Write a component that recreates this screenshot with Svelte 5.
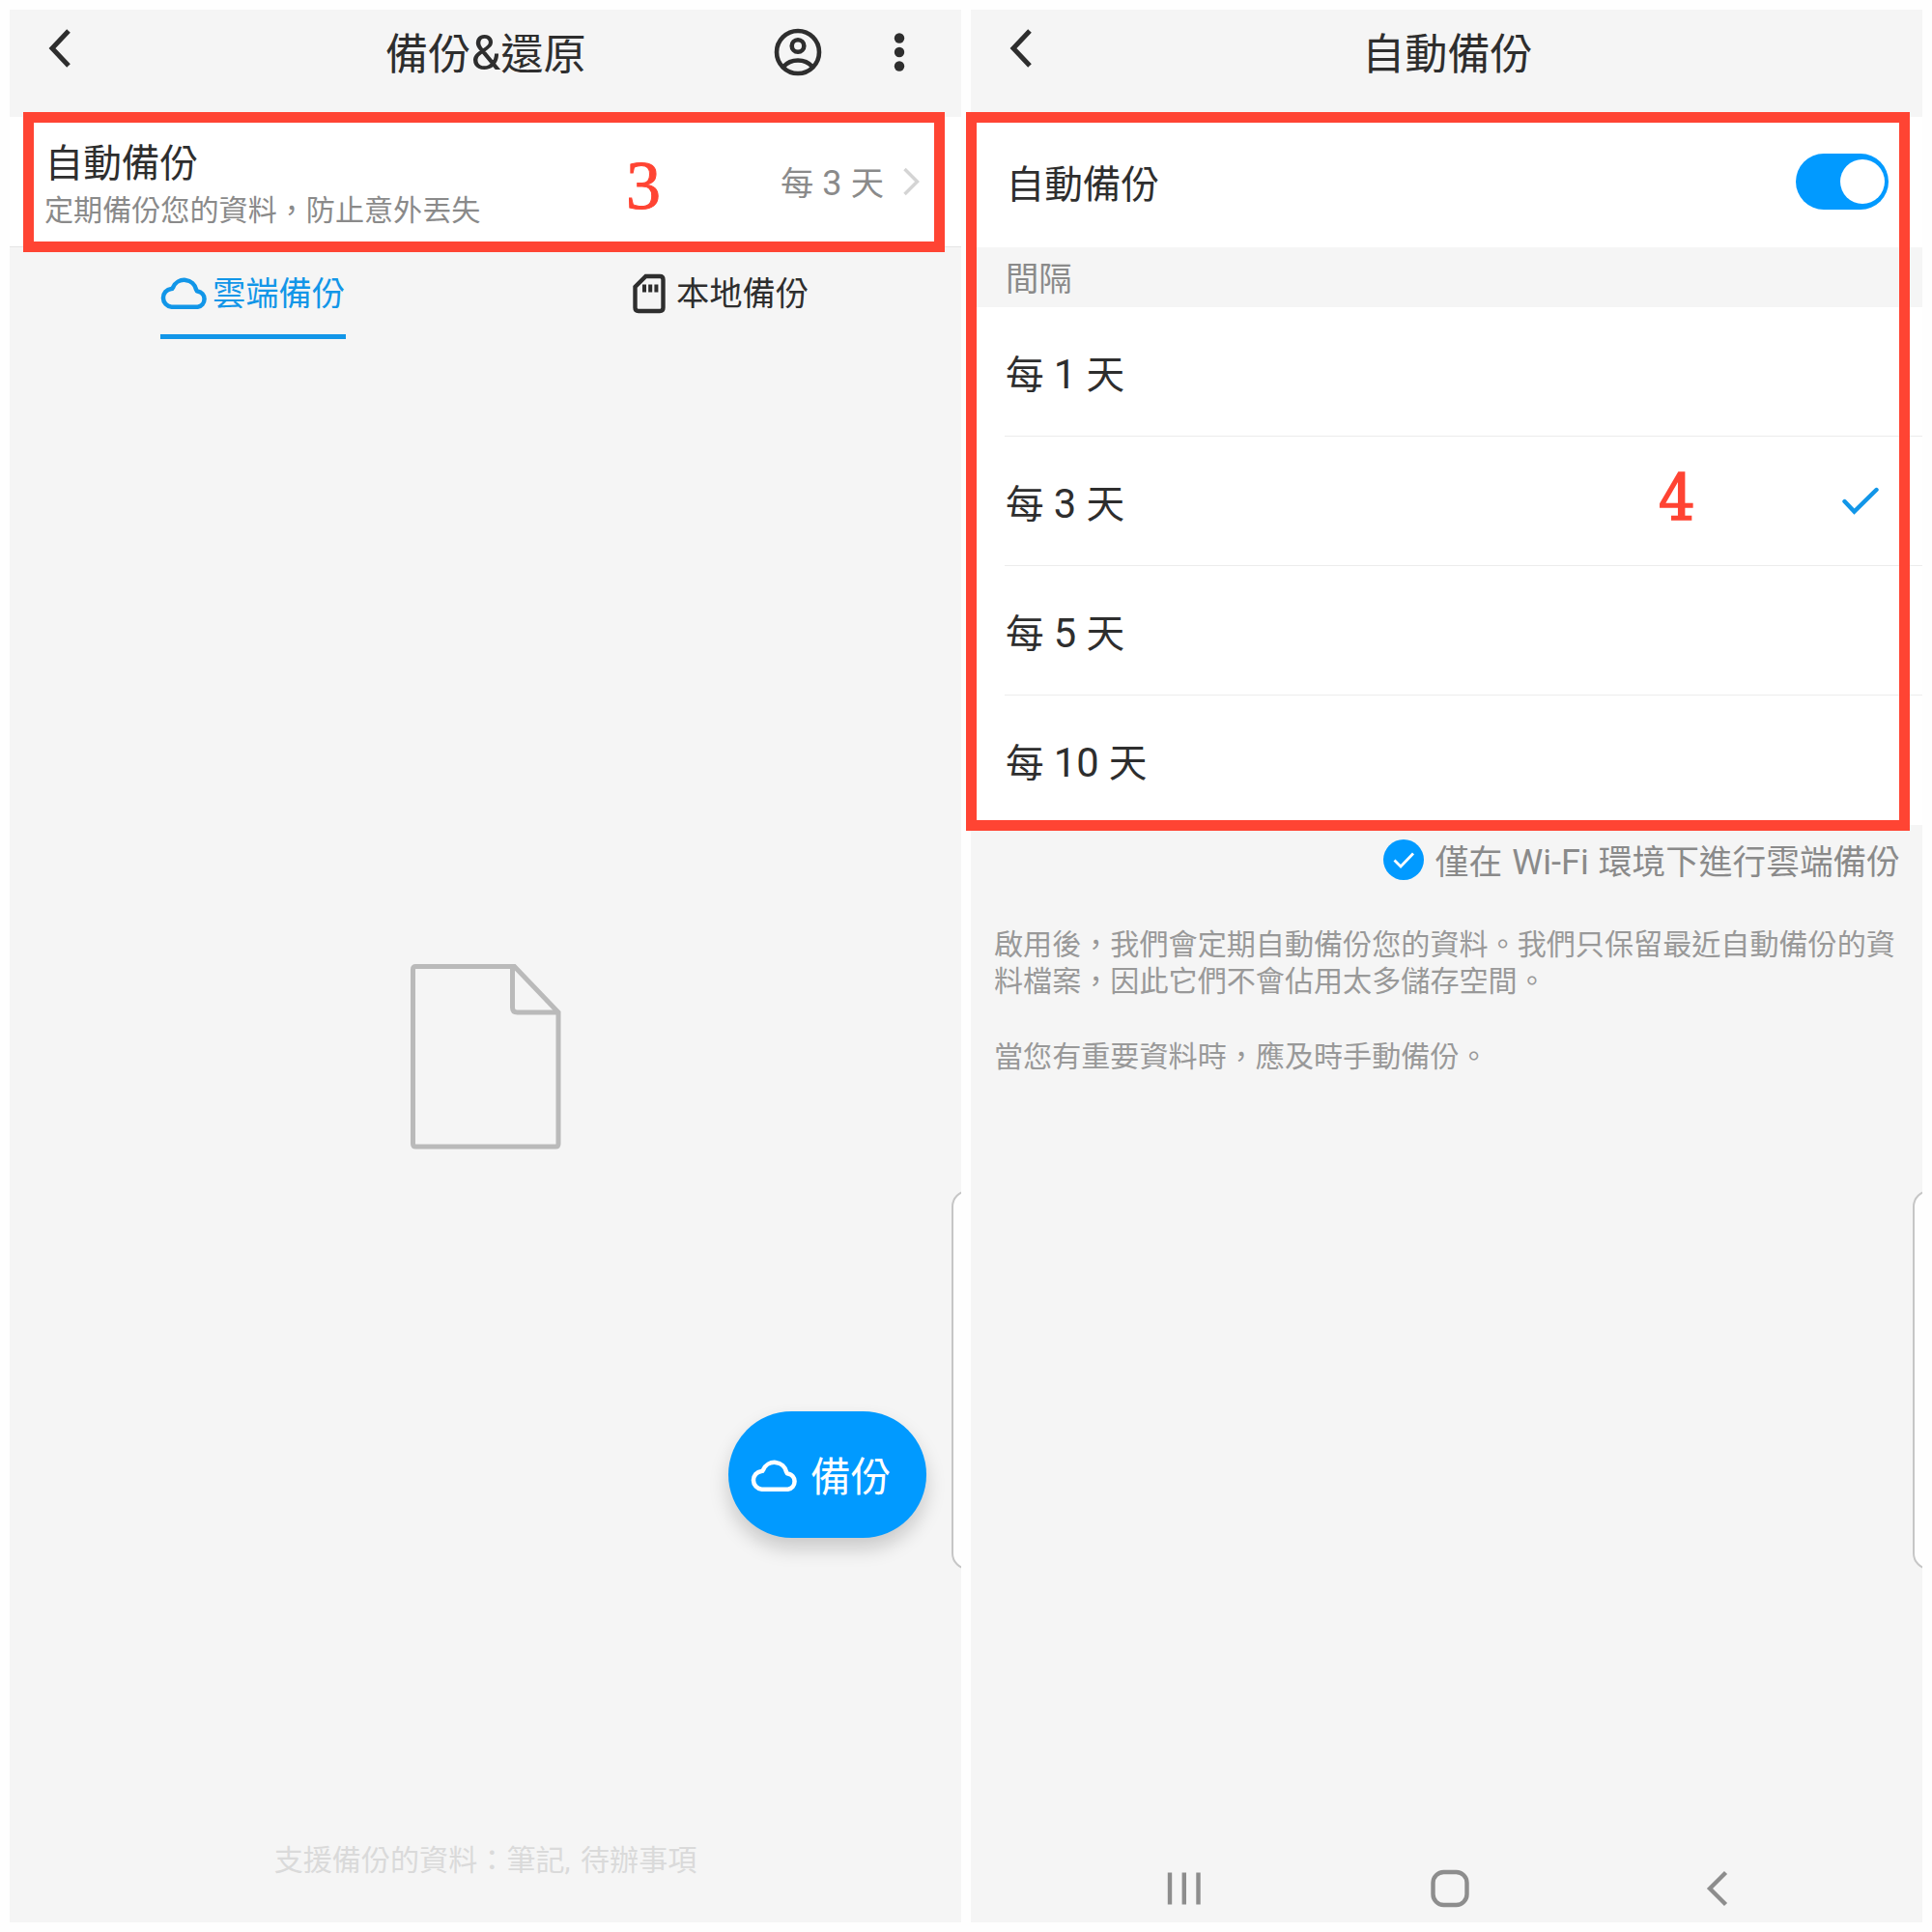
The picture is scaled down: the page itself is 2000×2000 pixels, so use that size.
<script>
  const intervals = [1, 3, 5, 10];
  let selected = $state(3);
  let enabled = $state(true);
</script>

{#snippet back()}
  <svg class="back" width="24" height="40" viewBox="0 0 24 40"><path d="M21 2 4 20l17 18" /></svg>
{/snippet}

{#snippet cloud()}
  <svg class="cloud" width="49" height="34" viewBox="0.500 0 47 33">
    <path d="M11.500 30.800a9.200 9.200 0 0 1-.300-18.300c.800 0 1.400-.400 1.700-1.200A12.300 12.300 0 0 1 36.300 13.600c.200.800.600 1.200 1.400 1.400A8 8 0 0 1 37.700 30.800z" />
  </svg>
{/snippet}

<main>
  <section class="phone">
    <header>
      {@render back()}
      <h1>備份<span class="latin">&amp;</span>還原</h1>
      <svg class="account" width="50" height="50" viewBox="0 0 50 50">
        <circle cx="25" cy="25" r="22" />
        <circle cx="25" cy="18.500" r="6.300" />
        <path d="M10 40c4-4.500 9-6.500 15-6.500s11 2 15 6.500" />
      </svg>
      <svg class="more" width="12" height="42" viewBox="0 0 12 42">
        <circle cx="6" cy="6.500" r="5.200" /><circle cx="6" cy="21" r="5.200" /><circle cx="6" cy="35.500" r="5.200" />
      </svg>
    </header>

    <div class="auto">
      <div class="label">
        <div class="item">自動備份</div>
        <div class="sub">定期備份您的資料，防止意外丟失</div>
      </div>
      <div class="value">每 <span class="latin">3</span> 天</div>
      <svg class="next" width="18" height="30" viewBox="0 0 18 30"><path d="M2.500 2 15.500 15 2.500 28" /></svg>
    </div>

    <nav class="tabs">
      <div class="tab active">{@render cloud()}<span>雲端備份</span></div>
      <div class="tab">
        <svg class="sd" width="34" height="42" viewBox="0 0 34 42">
          <path d="M13.500 3H28q3.500 0 3.500 3.500V35.500Q31.500 39 28 39H6Q2.500 39 2.500 35.500V14z" />
          <path class="pins" d="M12 11.500v8M18.200 11.500v8M24.400 11.500v8" />
        </svg>
        <span>本地備份</span>
      </div>
    </nav>

    <div class="empty">
      <svg class="doc" width="156" height="192" viewBox="0 0 156 192">
        <path d="M107.500 2.500H5.500Q2.500 2.500 2.500 5.500V186Q2.500 189 5.500 189H150Q153 189 153 186V50z" />
        <path d="M105.500 3V45q0 5 5 5H153" />
      </svg>
    </div>
    <button class="fab">{@render cloud()}<span>備份</span></button>
    <footer>支援備份的資料：筆記, 待辦事項</footer>
    <div class="edge"></div>
    <div class="mark first"></div>
    <div class="number three">3</div>
  </section>

  <section class="phone">
    <header>
      {@render back()}
      <h1 class="auto-title">自動備份</h1>
    </header>
    <div class="switch-row">
      <div class="item">自動備份</div>
      <button class="switch" class:on={enabled} aria-label="自動備份" onclick={() => (enabled = !enabled)}><i></i></button>
    </div>
    <div class="section-title">間隔</div>
    <div class="list">
      {#each intervals as days}
        <button class="option" onclick={() => (selected = days)}>
          <span>每 <span class="latin">{days}</span> 天</span>
          {#if selected === days}
            <svg class="tick" width="38" height="30" viewBox="0 0 38 30"><path d="M2.500 15 12.500 25.500 35.500 3" /></svg>
          {/if}
        </button>
      {/each}
    </div>
    <div class="wifi">
      <svg width="42" height="42" viewBox="0 0 42 42"><circle cx="21" cy="21" r="21" /><path d="M11.500 21.500 18 28 31 14.500" /></svg>
      <span>僅在 <span class="latin">Wi-Fi</span> 環境下進行雲端備份</span>
    </div>
    <div class="notes">
      <p>啟用後，我們會定期自動備份您的資料。我們只保留最近自動備份的資<br />料檔案，因此它們不會佔用太多儲存空間。</p>
      <p>當您有重要資料時，應及時手動備份。</p>
    </div>
    <div class="system">
      <svg width="36" height="40" viewBox="0 0 36 40"><path d="M3 3.500v33M17.800 3.500v33M32.500 3.500v33" /></svg>
      <svg width="40" height="40" viewBox="0 0 40 40"><rect x="2.500" y="3" width="35" height="34" rx="11" /></svg>
      <svg width="24" height="40" viewBox="0 0 24 40"><path d="M20.500 3.500 4 20l16.500 16.500" /></svg>
    </div>
    <div class="edge"></div>
    <div class="mark second"></div>
    <div class="number four">4</div>
  </section>
</main>

<style>
  :global(body) { margin: 0; background: #fefefe; }
  * { box-sizing: border-box; }
  main {
    width: 2000px; height: 2000px; padding: 10px; display: flex; gap: 10px; overflow: hidden;
    font-family: Roboto, "Noto Sans CJK TC", sans-serif; color: #2e2e2e;
  }
  svg { fill: none; stroke: currentColor; display: block; flex: none; }
  button { border: 0; background: none; padding: 0; font: inherit; color: inherit; }
  .latin { font-size: 1.050em; line-height: 1; }
  .phone {
    position: relative; width: 985px; height: 1980px; background: #f5f5f5;
    display: flex; flex-direction: column;
  }
  header { height: 111px; flex: none; display: flex; align-items: flex-start; padding-left: 40px; }
  .back { margin-top: 20px; stroke-width: 5; }
  h1 { margin: 15px 0 0 325px; width: 208px; font-size: 44.200px; line-height: 64px; font-weight: 400; white-space: nowrap; }
  h1 .latin { font-size: 1.120em; }
  .auto-title { margin-left: 341px; }
  .account { margin: 19px 0 0 194px; stroke-width: 4.600; }
  .more { margin: 23px 0 0 74px; fill: currentColor; stroke: none; }

  .auto { height: 135px; flex: none; background: #fff; border-bottom: 1px solid #e4e4e4; display: flex; align-items: center; padding: 0 43px 0 36px; }
  .label { flex: 1; padding-top: 5px; }
  .item { font-size: 39.700px; line-height: 58px; }
  .sub { font-size: 30.100px; line-height: 44px; color: #8a8a8a; margin-top: -3px; }
  .label .item { padding-left: .500px; }
  .value { font-size: 34.300px; line-height: 50px; color: #8a8a8a; margin: 3px 19px 0 0; word-spacing: .600px; }
  .next { color: #d4d4d4; stroke-width: 3.500; }

  .tabs { display: flex; flex: none; height: 96px; }
  .tab { height: 95px; margin-left: 156px; width: 192px; display: flex; align-items: center; font-size: 34.300px; padding-bottom: 5px; white-space: nowrap; }
  .tab.active { color: #1296e8; border-bottom: 5px solid #1296e8; padding-bottom: 0; }
  .tab.active .cloud, .tab.active :global(.cloud) { margin-top: 3px; }
  .tab.active span { margin-left: 5px; }
  .tab:last-child { margin-left: 297px; }
  .tab:last-child span { margin-left: 11px; }
  .cloud { stroke-width: 4.400; }
  .sd { stroke-width: 4.400; margin-top: 5px; }
  .sd .pins { stroke-width: 4; }

  .empty { flex: 1; padding: 646px 0 0 415px; }
  .doc { color: #bababa; stroke-width: 5; }
  .fab {
    position: absolute; left: 744px; top: 1451px; width: 205px; height: 131px; border-radius: 66px;
    background: #019aff; color: #fff; display: flex; align-items: center; padding: 0 0 2px 23px;
    font-size: 41.700px; box-shadow: 0 11px 20px #0000002e;
  }
  .fab .cloud { margin-top: 2px; }
  .fab span { margin-left: 13px; white-space: nowrap; }
  footer { height: 86px; flex: none; text-align: center; font-size: 30.100px; line-height: 44px; color: #dadada; word-spacing: 3px; }

  .edge { position: absolute; right: 0; top: 1222px; width: 10px; height: 393px; overflow: hidden; }
  .edge::before { content: ""; position: absolute; inset: 0 auto 0 0; width: 60px; border: 2px solid #c6c6c6; border-radius: 17px; background: #fefefe; }

  .mark { position: absolute; border: 11px solid #ff4433; pointer-events: none; }
  .first { left: 14px; top: 106px; width: 954px; height: 145px; }
  .second { left: -5px; top: 106px; width: 977px; height: 744px; }
  .number { position: absolute; color: #ff4433; }
  .three { left: 638px; top: 142px; font: 72px/80px "Liberation Serif", serif; -webkit-text-stroke: 1px #ff4433; }
  .four { left: 712px; top: 466px; font: 66px/80px "DejaVu Serif Condensed", "DejaVu Serif", serif; font-stretch: condensed; -webkit-text-stroke: 1.600px #ff4433; }

  .switch-row { height: 135px; flex: none; background: #fff; display: flex; align-items: center; justify-content: space-between; padding: 0 35px 0 36.500px; }
  .switch-row .item { margin-top: 7px; }
  .switch { width: 96px; height: 58px; border-radius: 29px; background: #ccc; padding: 6px 4px; display: flex; }
  .switch.on { background: #019aff; justify-content: flex-end; }
  .switch i { width: 46px; height: 46px; border-radius: 50%; background: #fff; }
  .switch-row .switch { margin-top: -2px; }
  .section-title { height: 62px; flex: none; padding: 8px 0 0 36px; font-size: 34.300px; line-height: 50px; color: #8a8a8a; }
  .list { background: #fff; height: 536px; flex: none; padding-left: 35px; display: grid; grid-template-rows: repeat(4, 1fr); }
  .option { display: flex; align-items: center; justify-content: space-between; font-size: 39.700px; word-spacing: .300px; border-bottom: 1px solid #ececec; padding: 0 45px 1px 1px; }
  .option:last-child { border-bottom: 0; }
  .tick { color: #1296e8; stroke-width: 4.400; stroke-linecap: round; margin-top: 2px; }
  .wifi { height: 72px; flex: none; display: flex; align-items: center; justify-content: flex-end; gap: 12px; padding-right: 23px; font-size: 34.700px; color: #8a8a8a; white-space: nowrap; word-spacing: 1.500px; }
  .wifi .latin { font-size: 1.040em; }
  .wifi circle { fill: #019aff; stroke: none; }
  .wifi path { stroke: #fff; stroke-width: 2.800; }
  .notes { padding: 33px 0 0 24px; flex: 1; color: #999; font-size: 30.100px; line-height: 38px; white-space: nowrap; }
  .notes p { margin: 0 0 40px; }
  .system { height: 55px; flex: none; display: flex; padding-left: 203px; color: #8d8d8d; }
  .system svg { stroke-width: 4.400; }
  .system svg:nth-child(2) { margin-left: 237px; }
  .system svg:nth-child(3) { margin-left: 245px; }
</style>
